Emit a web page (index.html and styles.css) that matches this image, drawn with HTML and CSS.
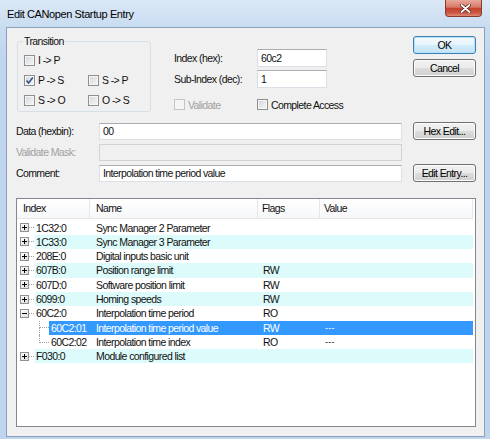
FILE: index.html
```html
<!DOCTYPE html>
<html lang="en">
<head>
  <meta charset="UTF-8">
  <title>Edit CANopen Startup Entry</title>
  <link rel="stylesheet" href="styles.css">
</head>
<body>
  <div class="window">
    <div class="titlebar">
      <span class="title">Edit CANopen Startup Entry</span>
      <button class="close-btn" aria-label="Close">
        <svg width="11" height="9" viewBox="0 0 11 9">
          <path d="M1.5 1 L9.5 8 M9.5 1 L1.5 8" stroke="#4a1a14" stroke-width="3.2" stroke-linecap="round"/>
          <path d="M1.5 1 L9.5 8 M9.5 1 L1.5 8" stroke="#fff" stroke-width="1.8" stroke-linecap="round"/>
        </svg>
      </button>
    </div>

    <div class="frame">
      <div class="client">

        <!-- transition / index / buttons -->
        <div class="top">
          <fieldset class="group">
            <legend>Transition</legend>
            <div class="trans">
              <label class="chk"><span class="box"></span>I -&gt; P</label>
              <span></span>
              <label class="chk"><span class="box"><svg width="9" height="9" viewBox="0 0 9 9"><path d="M1.5 4.5 L3.6 7 L7.8 1.6" fill="none" stroke="#34508f" stroke-width="1.6"/></svg></span>P -&gt; S</label>
              <label class="chk"><span class="box"></span>S -&gt; P</label>
              <label class="chk"><span class="box"></span>S -&gt; O</label>
              <label class="chk"><span class="box"></span>O -&gt; S</label>
            </div>
          </fieldset>

          <div class="ids">
            <span class="lbl">Index (hex):</span>
            <div class="input">60c2</div>
            <span class="lbl">Sub-Index (dec):</span>
            <div class="input">1</div>
            <label class="chk disabled opt"><span class="box"></span>Validate</label>
            <label class="chk opt"><span class="box"></span>Complete Access</label>
          </div>

          <div class="btns">
            <button class="btn default">OK</button>
            <button class="btn">Cancel</button>
          </div>
        </div>

        <!-- data fields -->
        <div class="form">
          <span class="lbl">Data (hexbin):</span>
          <div class="input">00</div>
          <button class="btn">Hex Edit...</button>

          <span class="lbl disabled">Validate Mask:</span>
          <div class="input off"></div>
          <span></span>

          <span class="lbl">Comment:</span>
          <div class="input">Interpolation time period value</div>
          <button class="btn">Edit Entry...</button>
        </div>

        <!-- entry list -->
        <div class="listview">
          <div class="lv-head">
            <div class="hc">Index</div>
            <div class="hc">Name</div>
            <div class="hc flags">Flags</div>
            <div class="hc val">Value</div>
          </div>
          <div class="lv-rows">
            <div class="row">
              <div class="tw"><span class="exp plus"></span><span class="hl"></span></div>
              <div class="rb"><span>1C32:0</span><span>Sync Manager 2 Parameter</span><span></span><span></span></div>
            </div>
            <div class="row">
              <div class="tw"><span class="exp plus"></span><span class="hl"></span></div>
              <div class="rb band"><span>1C33:0</span><span>Sync Manager 3 Parameter</span><span></span><span></span></div>
            </div>
            <div class="row">
              <div class="tw"><span class="exp plus"></span><span class="hl"></span></div>
              <div class="rb"><span>208E:0</span><span>Digital inputs basic unit</span><span></span><span></span></div>
            </div>
            <div class="row">
              <div class="tw"><span class="exp plus"></span><span class="hl"></span></div>
              <div class="rb band"><span>607B:0</span><span>Position range limit</span><span>RW</span><span></span></div>
            </div>
            <div class="row">
              <div class="tw"><span class="exp plus"></span><span class="hl"></span></div>
              <div class="rb"><span>607D:0</span><span>Software position limit</span><span>RW</span><span></span></div>
            </div>
            <div class="row">
              <div class="tw"><span class="exp plus"></span><span class="hl"></span></div>
              <div class="rb band"><span>6099:0</span><span>Homing speeds</span><span>RW</span><span></span></div>
            </div>
            <div class="row">
              <div class="tw"><span class="exp"></span><span class="hl"></span></div>
              <div class="rb"><span>60C2:0</span><span>Interpolation time period</span><span>RO</span><span></span></div>
            </div>
            <div class="row">
              <div class="tw child"><span class="elbow"><i class="up"></i><i class="down"></i></span></div>
              <div class="rb sub sel"><span>60C2:01</span><span>Interpolation time period value</span><span>RW</span><span class="dash">---</span></div>
            </div>
            <div class="row">
              <div class="tw child"><span class="elbow last"><i class="up"></i><i class="down"></i></span></div>
              <div class="rb sub"><span>60C2:02</span><span>Interpolation time index</span><span>RO</span><span class="dash">---</span></div>
            </div>
            <div class="row">
              <div class="tw"><span class="exp plus"></span><span class="hl"></span></div>
              <div class="rb band"><span>F030:0</span><span>Module configured list</span><span></span><span></span></div>
            </div>
          </div>
        </div>

      </div>
    </div>
  </div>
</body>
</html>
```

FILE: styles.css
```css
:root {
  --face: #f0f0f0;
  --frame: #bfd5ee;
  --text-off: #a0a0a0;
  --band: #ddfbfb;
  --select: #3399ff;
}

* {
  box-sizing: border-box;
}

html, body {
  margin: 0;
  padding: 0;
}

body {
  width: 490px;
  height: 439px;
  overflow: hidden;
  font-family: "Liberation Sans", Arial, sans-serif;
  font-size: 10.5px;
  letter-spacing: -0.6px;
  color: #111;
}

.window {
  width: 490px;
  height: 439px;
  display: flex;
  flex-direction: column;
  background: linear-gradient(#dbe8f6 0, #c9dcf1 27px, var(--frame) 60px);
}

.titlebar {
  height: 27px;
  flex: none;
  display: flex;
  align-items: center;
  padding-left: 7px;
}

.title {
  font-size: 11px;
  letter-spacing: -0.4px;
  color: #000;
}

.close-btn {
  align-self: flex-start;
  margin-left: auto;
  margin-right: 8px;
  width: 37px;
  height: 17px;
  padding: 0 0 0 4px;
  border: 1px solid #8a3b30;
  border-top: none;
  border-radius: 0 0 4px 4px;
  background: linear-gradient(#e8a899 0%, #d97a68 45%, #c2432f 52%, #cc5541 80%, #df8a75 100%);
  display: flex;
  align-items: center;
  justify-content: center;
}

.frame {
  flex: 1;
  padding: 0 5px 2px 6px;
  display: flex;
}

.client {
  flex: 1;
  display: flex;
  flex-direction: column;
  border: 1px solid #8aa0bb;
  background: var(--face);
  padding: 7px 8px 9px 9px;
}

/* top area */

.top {
  display: flex;
  align-items: flex-start;
}

.group {
  margin: 0 0 0 1px;
  padding: 0 0 1px 6px;
  width: 134px;
  height: 77px;
  border: 1px solid #d5dfe5;
  border-radius: 3px;
}

.group legend {
  padding: 0 1px;
  margin-left: -1px;
  line-height: 12px;
}

.trans {
  display: grid;
  grid-template-columns: 64px 1fr;
  grid-auto-rows: 20px;
  padding-top: 3px;
}

.chk {
  display: flex;
  align-items: center;
  gap: 3px;
  white-space: nowrap;
}

.box {
  width: 11px;
  height: 11px;
  flex: none;
  border: 1px solid #8e8f8f;
  background: linear-gradient(135deg, #d3d6db 0%, #f7f7f7 100%);
  box-shadow: inset 0 0 0 1px #f6f6f6;
  display: flex;
  align-items: center;
  justify-content: center;
}

.chk.disabled {
  color: var(--text-off);
}

.chk.disabled .box {
  border-color: #c4c4c4;
  background: #f4f4f4;
}

.ids {
  margin-left: 23px;
  margin-top: 14px;
  display: grid;
  grid-template-columns: 83px 70px;
  row-gap: 3px;
  align-items: center;
}

.ids .input {
  height: 18px;
}

.opt {
  height: 16px;
  margin-top: 5.5px;
}

.lbl {
  white-space: nowrap;
}

.lbl.disabled {
  color: var(--text-off);
}

.input {
  height: 17px;
  background: #fff;
  border: 1px solid #dbdfe6;
  border-top-color: #abadb3;
  padding: 0 3px;
  display: flex;
  align-items: center;
  white-space: nowrap;
}

.input.off {
  background: #f0f0f0;
  border-color: #d3d3d3;
}

.btns {
  margin-left: auto;
  margin-top: 1px;
  display: flex;
  flex-direction: column;
  gap: 5px;
}

.btn {
  width: 63px;
  height: 18px;
  padding: 0;
  font: inherit;
  letter-spacing: inherit;
  color: #000;
  border: 1px solid #707070;
  border-radius: 3px;
  background: linear-gradient(#f2f2f2 0%, #ebebeb 50%, #dddddd 51%, #cfcfcf 100%);
  box-shadow: inset 0 0 0 1px #fcfcfc;
}

.btn.default {
  border-color: #3c7fb1;
  box-shadow: inset 0 0 0 1px #b6e3f9;
  background: linear-gradient(#f3f9fd 0%, #e6f4fc 50%, #d4ecfa 51%, #c4e4f7 100%);
}

/* data fields */

.form {
  margin-top: 9px;
  display: grid;
  grid-template-columns: 83px 303px 74px;
  row-gap: 2px;
  grid-auto-rows: 19px;
  align-items: center;
}

.form .btn {
  justify-self: end;
}

/* list */

.listview {
  flex: 1;
  margin-top: 15.5px;
  background: #fff;
  border: 1px solid #828790;
  padding-right: 2px;
}

.lv-head {
  display: grid;
  grid-template-columns: 73px 168px 62px 1fr;
  height: 20px;
  border-bottom: 1px solid #e5e5e5;
  background: linear-gradient(#ffffff, #f6f7f9);
}

.hc {
  line-height: 19px;
  padding-left: 6px;
  border-right: 1px solid #e3e8ee;
}

.hc.flags {
  padding-left: 4px;
}

.hc.val {
  padding-left: 4px;
}

.lv-rows {
  padding-top: 1.5px;
}

.row {
  display: flex;
  height: 14.3px;
  line-height: 14.3px;
}

.tw {
  width: 18px;
  flex: none;
  display: flex;
  align-items: center;
  padding-left: 3px;
}

.tw.child {
  width: 32px;
  padding-left: 22px;
  align-items: stretch;
}

.exp {
  width: 9px;
  height: 9px;
  flex: none;
  border: 1px solid #919191;
  background: linear-gradient(135deg, #ffffff, #dcdcdc);
  display: flex;
  align-items: center;
  justify-content: center;
}

.exp::before {
  content: "";
  width: 5px;
  height: 1px;
  background: #000;
}

.exp.plus {
  background: linear-gradient(#000, #000) center / 1px 5px no-repeat,
              linear-gradient(135deg, #ffffff, #dcdcdc);
}

.hl {
  width: 5px;
  margin-right: 1px;
  border-top: 1px dotted #a0a0a0;
}

.elbow {
  width: 10px;
  display: flex;
  flex-direction: column;
}

.elbow i {
  flex: 1;
  border-left: 1px dotted #a0a0a0;
}

.elbow .up {
  border-bottom: 1px dotted #a0a0a0;
}

.elbow.last .down {
  border-left: none;
}

.rb {
  flex: 1;
  display: grid;
  grid-template-columns: 55px 168px 62px 1fr;
  white-space: nowrap;
}

.rb.sub {
  grid-template-columns: 41px 168px 62px 1fr;
}

.rb span {
  padding-left: 6px;
  overflow: hidden;
}

.rb span:first-child {
  padding-left: 1px;
}

.rb.sub span:first-child {
  padding-left: 2px;
}

.rb span:nth-child(3),
.rb span:nth-child(4) {
  padding-left: 5px;
}

.rb.band {
  background: var(--band);
}

.rb.sel {
  background: var(--select);
  color: #fff;
}

.dash {
  font-size: 9px;
  letter-spacing: 0.3px;
}
```
